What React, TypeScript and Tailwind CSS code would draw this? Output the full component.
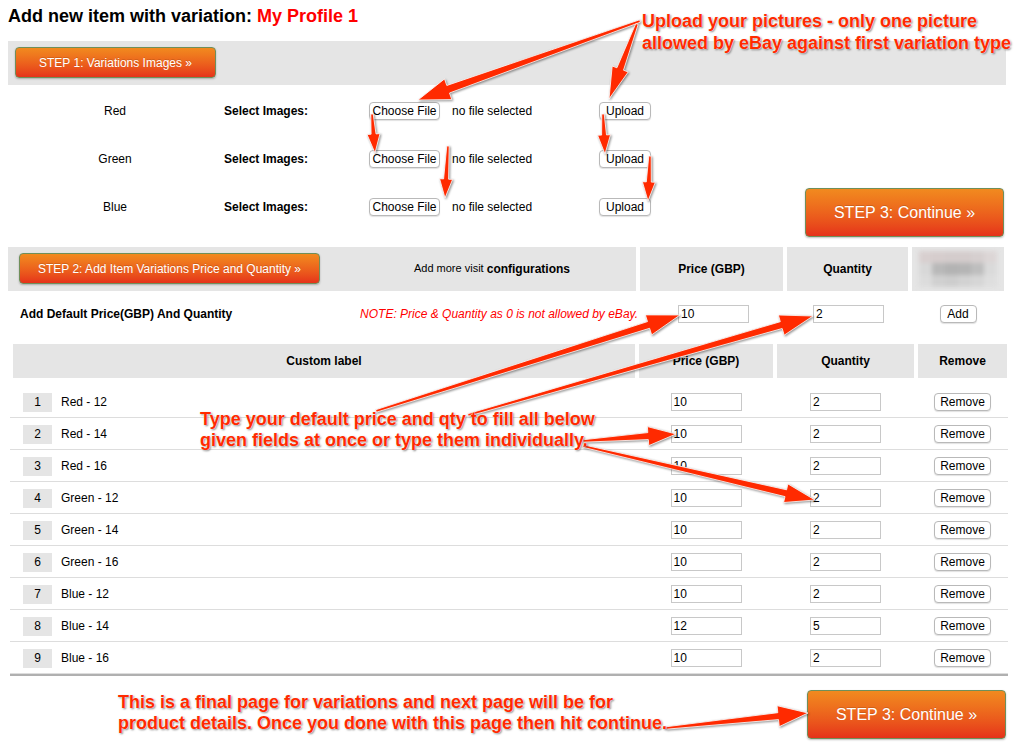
const rows = [
  { n: 1, label: "Red - 12", price: "10", qty: "2" },
  { n: 2, label: "Red - 14", price: "10", qty: "2" },
  { n: 3, label: "Red - 16", price: "10", qty: "2" },
  { n: 4, label: "Green - 12", price: "10", qty: "2" },
  { n: 5, label: "Green - 14", price: "10", qty: "2" },
  { n: 6, label: "Green - 16", price: "10", qty: "2" },
  { n: 7, label: "Blue - 12", price: "10", qty: "2" },
  { n: 8, label: "Blue - 14", price: "12", qty: "5" },
  { n: 9, label: "Blue - 16", price: "10", qty: "2" },
];

const colors = ["Red", "Green", "Blue"];

function OrangeButton({ children, className }: { children: React.ReactNode; className: string }) {
  return (
    <div
      className={
        "flex items-center justify-center rounded-[4px] border border-[#6f8f5a] bg-gradient-to-b from-[#f18a1f] to-[#e5311a] text-white shadow-[0_1px_2px_rgba(0,0,0,0.25)] [text-shadow:0_-1px_0_rgba(0,0,0,0.15)] " +
        className
      }
    >
      {children}
    </div>
  );
}

function SmallButton({ children, className }: { children: React.ReactNode; className: string }) {
  return (
    <div
      className={
        "flex h-[18px] items-center justify-center rounded-[4px] border border-[#b9b9b9] bg-white text-[12px] text-black shadow-[0_1px_1px_rgba(0,0,0,0.12)] " +
        className
      }
    >
      {children}
    </div>
  );
}

function Field({ value }: { value: string }) {
  return (
    <div className="flex h-[18px] w-[71px] items-center border border-[#c8c8c8] bg-white pl-[2px] text-[12px] text-black">
      {value}
    </div>
  );
}

// tapered arrow polygon from tail to tip
function arrowPoints(x1: number, y1: number, x2: number, y2: number, w0: number, w1: number, hw: number, hl: number) {
  const len = Math.hypot(x2 - x1, y2 - y1);
  const dx = (x2 - x1) / len;
  const dy = (y2 - y1) / len;
  const nx = -dy;
  const ny = dx;
  const bx = x2 - dx * hl;
  const by = y2 - dy * hl;
  const p = [
    [x1 + (nx * w0) / 2, y1 + (ny * w0) / 2],
    [bx + (nx * w1) / 2, by + (ny * w1) / 2],
    [bx + (nx * hw) / 2, by + (ny * hw) / 2],
    [x2, y2],
    [bx - (nx * hw) / 2, by - (ny * hw) / 2],
    [bx - (nx * w1) / 2, by - (ny * w1) / 2],
    [x1 - (nx * w0) / 2, y1 - (ny * w0) / 2],
  ];
  return p.map((q) => q[0].toFixed(1) + "," + q[1].toFixed(1)).join(" ");
}

const arrows: [number, number, number, number, number, number, number, number][] = [
  [640, 21, 418, 100, 2.5, 8, 22, 32],
  [637, 24, 609, 99, 2.5, 7, 17, 32],
  [372, 114, 375, 153, 2.5, 5, 13, 19],
  [448, 146, 445, 198, 2.5, 5, 13, 19],
  [603, 114, 605, 154, 2.5, 5, 13, 19],
  [650, 156, 648, 201, 2.5, 5, 13, 19],
  [376, 411, 680, 315, 2.5, 7, 21, 33],
  [468, 415, 813, 316, 2.5, 7, 21, 33],
  [583, 441, 676, 434, 2.5, 7, 19, 28],
  [583, 446, 815, 500, 2.5, 7, 19, 30],
  [666, 728, 808, 713, 2.5, 7, 21, 30],
];

const note =
  "absolute text-[18px] font-bold text-[#ff2a00] [text-shadow:0_0_1px_#fff,0_0_2px_#fff,1px_1px_2px_rgba(0,0,0,0.55)]";

export default function App() {
  return (
    <div className="relative h-[752px] w-[1020px] overflow-hidden bg-white font-['Liberation_Sans',Arial,sans-serif] text-black">
      <div className="h-[41px] pl-[8px] pt-[5px] text-[18px] font-bold leading-[22px]">
        Add new item with variation: <span className="text-[#ff0000]">My Profile 1</span>
      </div>

      <div className="mx-[8px] flex h-[44px] w-[998px] items-start bg-[#e5e5e5] pl-[7px] pt-[6px]">
        <OrangeButton className="h-[31px] w-[201px] text-[12px]">STEP 1: Variations Images »</OrangeButton>
      </div>

      <div className="flex h-[162px]">
        <div className="flex flex-col pl-[8px] pt-[2px]">
          {colors.map((c) => (
            <div key={c} className="flex h-[48px] items-center text-[12px]">
              <div className="w-[214px] text-center">{c}</div>
              <div className="w-[147px] pl-[2px] font-bold">Select Images:</div>
              <div className="flex w-[230px] items-center">
                <SmallButton className="w-[71px]">Choose File</SmallButton>
                <span className="ml-[12px]">no file selected</span>
              </div>
              <SmallButton className="w-[52px]">Upload</SmallButton>
            </div>
          ))}
        </div>
        <div className="ml-auto flex flex-col justify-end pb-[10px] pr-[16px]">
          <OrangeButton className="h-[49px] w-[199px] text-[16px]">STEP 3: Continue »</OrangeButton>
        </div>
      </div>

      <div className="ml-[8px] grid h-[44px] grid-cols-[628px_143px_121px_92px] gap-x-[4px] text-[12px]">
        <div className="flex items-start bg-[#e5e5e5] pl-[11px] pt-[6px]">
          <OrangeButton className="h-[31px] w-[301px] text-[12px]">STEP 2: Add Item Variations Price and Quantity »</OrangeButton>
          <div className="flex h-[31px] flex-1 items-center justify-center pl-[28px] text-[11px]">
            Add more visit&nbsp;<span className="text-[12px] font-bold">configurations</span>
          </div>
        </div>
        <div className="flex items-center justify-center bg-[#e5e5e5] font-bold">Price (GBP)</div>
        <div className="flex items-center justify-center bg-[#e5e5e5] font-bold">Quantity</div>
        <div className="flex items-center justify-center bg-[#e5e5e5]">
          <div className="grid h-[36px] w-[78px] grid-cols-6 grid-rows-3 blur-[2px]">
            <div className="bg-[#d8cfcf]" />
            <div className="bg-[#d6cdcd]" />
            <div className="bg-[#d4cccc]" />
            <div className="bg-[#d4cccc]" />
            <div className="bg-[#d6cfcf]" />
            <div className="bg-[#dcd6d6]" />
            <div className="bg-[#d8d8d8]" />
            <div className="bg-[#b9b9b9]" />
            <div className="bg-[#b3b3b3]" />
            <div className="bg-[#b5b5b5]" />
            <div className="bg-[#bebebe]" />
            <div className="bg-[#dadada]" />
            <div className="bg-[#dcdcdc]" />
            <div className="bg-[#d0d0d0]" />
            <div className="bg-[#cdcdcd]" />
            <div className="bg-[#d2d2d2]" />
            <div className="bg-[#d6d6d6]" />
            <div className="bg-[#dedede]" />
          </div>
        </div>
      </div>

      <div className="ml-[8px] grid h-[46px] grid-cols-[628px_143px_121px_92px] items-center gap-x-[4px] text-[12px]">
        <div className="flex items-center justify-between pl-[12px]">
          <span className="font-bold">Add Default Price(GBP) And Quantity</span>
          <span className="-mr-[2px] italic text-[#ff0000]">NOTE: Price &amp; Quantity as 0 is not allowed by eBay.</span>
        </div>
        <div className="flex justify-center pl-[4px]">
          <Field value="10" />
        </div>
        <div className="flex justify-center pl-[2px]">
          <Field value="2" />
        </div>
        <div className="flex justify-center">
          <SmallButton className="w-[37px]">Add</SmallButton>
        </div>
      </div>

      <div className="ml-[13px] mt-[7px] grid h-[34px] grid-cols-[622px_134px_137px_89px] gap-x-[4px] text-[12px] font-bold">
        <div className="flex items-center justify-center bg-[#e5e5e5]">Custom label</div>
        <div className="flex items-center justify-center bg-[#e5e5e5]">Price (GBP)</div>
        <div className="flex items-center justify-center bg-[#e5e5e5]">Quantity</div>
        <div className="flex items-center justify-center bg-[#e5e5e5]">Remove</div>
      </div>

      <div className="mx-[10px] mt-[8px] w-[998px]">
        {rows.map((r) => (
          <div
            key={r.n}
            className="grid h-[32px] grid-cols-[622px_134px_137px_89px] items-center gap-x-[4px] border-b border-[#dddddd] pl-[3px] pt-[1px] text-[12px]"
          >
            <div className="flex items-center pl-[10px]">
              <div className="flex h-[19px] w-[29px] items-center justify-center bg-[#e5e5e5]">{r.n}</div>
              <span className="ml-[9px]">{r.label}</span>
            </div>
            <div className="flex justify-center">
              <Field value={r.price} />
            </div>
            <div className="flex justify-center">
              <Field value={r.qty} />
            </div>
            <div className="flex justify-center">
              <SmallButton className="w-[57px]">Remove</SmallButton>
            </div>
          </div>
        ))}
        <div className="h-[2px] bg-[#b0b0b0]" />
      </div>

      <div className="flex justify-end pr-[14px] pt-[14px]">
        <OrangeButton className="h-[49px] w-[199px] text-[16px]">STEP 3: Continue »</OrangeButton>
      </div>

      <svg
        className="pointer-events-none absolute left-0 top-0 [filter:drop-shadow(1px_1px_1px_rgba(0,0,0,0.45))]"
        width={1020}
        height={752}
      >
        {arrows.map((a, i) => (
          <polygon
            key={i}
            points={arrowPoints(a[0], a[1], a[2], a[3], a[4], a[5], a[6], a[7])}
            fill="#ff2a00"
            stroke="#ffffff"
            strokeWidth={0.8}
            strokeLinejoin="round"
          />
        ))}
      </svg>

      <div className={note + " left-[642px] top-[10px] leading-[22px]"}>
        Upload your pictures - only one picture
        <br />
        allowed by eBay against first variation type
      </div>
      <div className={note + " left-[200px] top-[409px] leading-[21px]"}>
        Type your default price and qty to fill all below
        <br />
        given fields at once or type them individually.
      </div>
      <div className={note + " left-[118px] top-[692px] leading-[21px]"}>
        This is a final page for variations and next page will be for
        <br />
        product details. Once you done with this page then hit continue.
      </div>
    </div>
  );
}
